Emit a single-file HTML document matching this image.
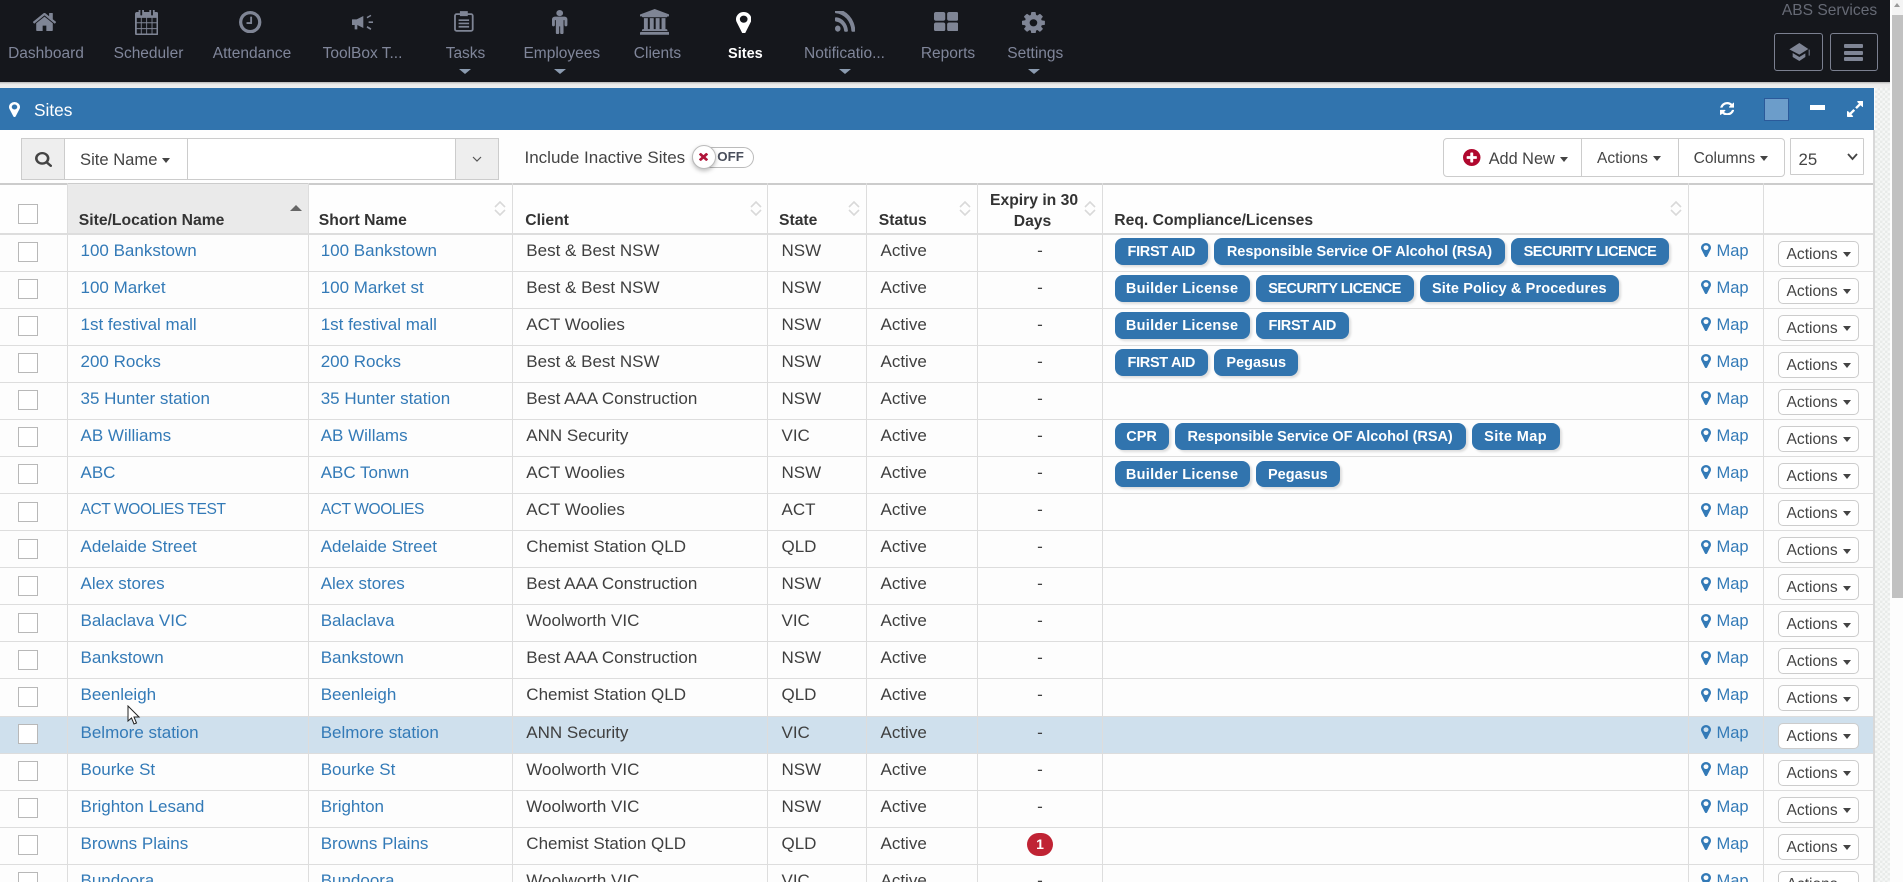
<!DOCTYPE html>
<html lang="en"><head><meta charset="utf-8"><title>Sites</title>
<style>
*{box-sizing:border-box}
html,body{margin:0;padding:0;width:1903px;height:882px;overflow:hidden;background:#fdfdfd;font-family:"Liberation Sans",sans-serif;color:#444}
body{position:relative}
.abs,.n,.ic{position:absolute}
#top{position:absolute;left:0;top:0;width:1890px;height:82px;background:#15171c}
.n{top:44px;line-height:20px;font-size:15.5px;color:#80869a;transform:translateX(-50%);white-space:nowrap}
.ic{fill:#7f8595;display:block}
.tri{position:absolute;width:0;height:0;border-left:6px solid transparent;border-right:6px solid transparent;border-top:5px solid #8b9bb0;top:69px}
.car{display:inline-block;width:0;height:0;border-left:4.5px solid transparent;border-right:4.5px solid transparent;border-top:5px solid #444;vertical-align:middle;margin-left:5px}
#strip{position:absolute;left:0;top:82px;width:1890px;height:6px;background:linear-gradient(#b5b5b5,#e9e9e9 35%,#f0f0f0)}
#noise{position:absolute;left:1875px;top:88px;width:15px;height:794px;background:repeating-conic-gradient(#e8ebe9 0 25%,#f6f7f6 0 50%) 0 0/5px 5px}
#sb{position:absolute;left:1890px;top:0;width:13px;height:882px;background:#fdfdfd}
#bar{position:absolute;left:0;top:88px;width:1874px;height:42px;background:#3174ae}
#panel{position:absolute;left:0;top:130px;width:1875px;height:752px;background:#fefefe;border-right:2px solid #d8d8d8;overflow:hidden}
.bx{position:absolute;border:1px solid #ccc;background:#fff}
.t{position:absolute;white-space:nowrap}
.th{position:absolute;font-weight:bold;font-size:15.7px;color:#333;line-height:20px;white-space:nowrap}
.vl{position:absolute;top:183px;height:52px;width:1px;background:#ddd}
#rows{position:absolute;left:0;top:234.5px;width:1873px;height:647.5px;overflow:hidden}
.r{display:grid;grid-template-columns:66.5px 241px 204.5px 255px 99px 111px 125px 586px 74.5px 110.5px;height:37.08px;border-bottom:1px solid #ddd;font-size:17px;line-height:32.2px;background:#fdfdfd}
.r>div{border-left:1px solid #ddd;white-space:nowrap;overflow:hidden;position:relative;color:#3f3f3f}
.r>div:first-child{border-left:0}
.r>div:nth-child(2),.r>div:nth-child(3){padding-left:13px;color:#337ab7}
.r>div:nth-child(3){padding-left:12.2px}
.r>div:nth-child(4){padding-left:13.3px}
.r>div:nth-child(5){padding-left:13.5px}
.r>div:nth-child(6){padding-left:13.5px}
.r>div:nth-child(7){text-align:center}
.r>div:nth-child(8){display:flex;gap:6px;padding:3.6px 0 0 11.6px}
.r>div:nth-child(9){padding-left:27.5px;color:#337ab7;font-size:16.5px;line-height:32.8px}
.hl{background:#cfe0ed}
.k{position:absolute;left:18px;top:7.5px;width:20px;height:20px;border:1px solid #b8b8b8;background:#fff}
.pin{position:absolute;left:12px;top:8.5px;width:10px;height:14px;fill:#337ab7}
.a{position:absolute;left:14.5px;top:6px;width:80.5px;height:26px;border:1px solid #ccc;border-radius:5px;background:#fff;font-size:15.6px;line-height:25px;padding-left:7.5px;color:#444}
.a .car{margin-left:5px}
.g{display:block;height:26.7px;line-height:28px;border-radius:8px;background:#3174ae;color:#fff;font-weight:bold;font-size:14.5px;text-align:center;box-shadow:2px 2px 2px rgba(0,0,0,.13);white-space:nowrap;flex:none}
.fa{width:93.4px;letter-spacing:-.32px}
.rs{width:291px;letter-spacing:-.05px}
.se{width:158px;letter-spacing:-.5px}
.bl{width:135px;letter-spacing:.3px}
.sp{width:199.5px;letter-spacing:.13px}
.pe{width:84.5px}
.cp{width:54px}
.sm{width:88px;letter-spacing:.4px}
.one{display:inline-block;width:26px;height:23px;line-height:23px;margin-top:5px;border-radius:12px;background:#c02334;color:#fff;font-weight:bold;font-size:14px}
.cc{font-size:15.6px;letter-spacing:-.43px}
</style></head><body>
<svg width="0" height="0" style="position:absolute"><defs>
<symbol id="pin" viewBox="384 128 1024 1536" preserveAspectRatio="none"><path d="M1152 640q0-106-75-181t-181-75-181 75-75 181 75 181 181 75 181-75 75-181zm256 0q0 109-33 179l-364 774q-16 33-47.500 52t-67.500 19-67.500-19-46.500-52l-365-774q-33-70-33-179 0-212 150-362t362-150 362 150 150 362z"/></symbol>
<symbol id="chev" viewBox="0 0 12 17"><path d="M1 8 6 3l5 5M1 11l5 5 5-5" fill="none" stroke="#d9d9d9" stroke-width="1.6"/></symbol>
</defs></svg>

<div id="top">
<svg class="ic" style="left:33px;top:13px;width:23px;height:18px" viewBox="97 256 1598 1280" preserveAspectRatio="none"><path d="M1472 992v480q0 26-19 45t-45 19h-384v-384h-256v384h-384q-26 0-45-19t-19-45v-480q0-1 .5-3t.5-3l575-474 575 474q1 2 1 6zm223-69l-62 74q-8 9-21 11h-3q-13 0-21-7l-692-577-692 577q-12 8-24 7-13-2-21-11l-62-74q-8-10-7-23.500t11-21.500l719-599q32-26 76-26t76 26l244 204v-195q0-14 9-23t23-9h192q14 0 23 9t9 23v408l219 182q10 8 11 21.500t-7 23.500z"/></svg>
<svg class="ic" style="left:135px;top:9.500px;width:23.300px;height:25.500px" viewBox="64 128 1664 1664" preserveAspectRatio="none"><path d="M192 1664h288v-288h-288v288zm352 0h320v-288h-320v288zm-352-352h288v-320h-288v320zm352 0h320v-320h-320v320zm-352-384h288v-288h-288v288zm736 736h320v-288h-320v288zm-384-736h320v-288h-320v288zm768 736h288v-288h-288v288zm-384-352h320v-320h-320v320zm-352-864v-288q0-13-9.500-22.500t-22.500-9.500h-64q-13 0-22.500 9.500t-9.500 22.500v288q0 13 9.500 22.500t22.500 9.500h64q13 0 22.500-9.500t9.500-22.500zm736 864h288v-320h-288v320zm-384-384h320v-288h-320v288zm384 0h288v-288h-288v288zm32-480v-288q0-13-9.500-22.500t-22.500-9.500h-64q-13 0-22.500 9.500t-9.500 22.500v288q0 13 9.500 22.500t22.500 9.500h64q13 0 22.500-9.500t9.500-22.500zm384-64v1280q0 52-38 90t-90 38h-1408q-52 0-90-38t-38-90v-1280q0-52 38-90t90-38h128v-96q0-66 47-113t113-47h64q66 0 113 47t47 113v96h384v-96q0-66 47-113t113-47h64q66 0 113 47t47 113v96h128q52 0 90 38t38 90z"/></svg>
<svg class="ic" style="left:239.300px;top:11px;width:22.400px;height:22.300px" viewBox="128 128 1536 1536" preserveAspectRatio="none"><path d="M1024 544v448q0 14-9 23t-23 9h-320q-14 0-23-9t-9-23v-64q0-14 9-23t23-9h224v-352q0-14 9-23t23-9h64q14 0 23 9t9 23zm416 352q0-148-73-273t-198-198-273-73-273 73-198 198-73 273 73 273 198 198 273 73 273-73 198-198 73-273zm224 0q0 209-103 385.500t-279.500 279.500-385.500 103-385.500-103-279.500-279.500-103-385.500 103-385.500 279.500-279.500 385.500-103 385.500 103 279.500 279.500 103 385.500z"/></svg>
<svg class="ic" style="left:352px;top:14px;width:21.300px;height:16.700px" viewBox="0 0 64 50"><path d="M0 16h14L34 6v36L16 33v13h-8V33H0z"/><path d="M44 9l12-7 2 4-12 7zM50 22h14v5H50zM46 36l12 7-2 5-12-7z"/></svg>
<svg class="ic" style="left:454.300px;top:11px;width:19.700px;height:21px" viewBox="0 0 60 63"><rect x="3" y="9" width="54" height="51" rx="5" fill="none" stroke="#7f8595" stroke-width="5.500"/><path d="M18 0h24v15H18zM14 25h32v5H14zM14 35h32v5H14zM14 45h32v5H14z"/></svg>
<svg class="ic" style="left:552.300px;top:10px;width:15.400px;height:24.300px" viewBox="0 160 1024 1760" preserveAspectRatio="none"><path d="M1024 832v416q0 40-28 68t-68 28-68-28-28-68v-352h-64v912q0 46-33 79t-79 33-79-33-33-79v-464h-64v464q0 46-33 79t-79 33-79-33-33-79v-912h-64v352q0 40-28 68t-68 28-68-28-28-68v-416q0-80 56-136t136-56h640q80 0 136 56t56 136zm-288-448q0 93-65.500 158.500t-158.500 65.500-158.500-65.500-65.500-158.500 65.500-158.500 158.500-65.500 158.500 65.500 65.500 158.500z"/></svg>
<svg class="ic" style="left:640px;top:9.300px;width:29.400px;height:25.700px" viewBox="0 0 1920 1792" preserveAspectRatio="none"><path d="M960 0l960 384v128h-128q0 26-20.500 45t-48.500 19h-1526q-28 0-48.500-19t-20.500-45h-128v-128zm-704 640h256v768h128v-768h256v768h128v-768h256v768h128v-768h256v768h59q28 0 48.500 19t20.500 45v64h-1664v-64q0-26 20.500-45t48.500-19h59v-768zm1595 960q28 0 48.500 19t20.500 45v128h-1920v-128q0-26 20.500-45t48.500-19h1782z"/></svg>
<svg class="ic" style="left:736px;top:11.700px;width:15.400px;height:21.600px;fill:#fff"><use href="#pin" width="15.400" height="21.600"/></svg>
<svg class="ic" style="left:834.700px;top:11px;width:20.300px;height:20.700px" viewBox="192 256 1408 1280" preserveAspectRatio="none"><path d="M576 1344q0 80-56 136t-136 56-136-56-56-136 56-136 136-56 136 56 56 136zm512 123q2 28-17 48-18 21-47 21h-135q-25 0-43-16.500t-20-41.500q-22-229-184.500-391.500t-391.500-184.500q-25-2-41.500-20t-16.500-43v-135q0-29 21-47 17-17 43-17h5q160 13 306 80.500t259 181.500q114 113 181.500 259t80.500 306zm512 2q2 27-18 47-18 20-46 20h-143q-26 0-44.500-17.500t-19.500-42.500q-12-215-101-408.500t-231.500-336-336-231.500-408.500-102q-25-1-42.500-19.500t-17.500-43.500v-143q0-28 20-46 18-18 44-18h3q262 13 501.500 120t425.500 294q187 186 294 425.500t120 501.500z"/></svg>
<svg class="ic" style="left:934px;top:11.700px;width:24.400px;height:19.300px" viewBox="64 128 1664 1408" preserveAspectRatio="none"><path d="M832 1024v384q0 52-38 90t-90 38h-512q-52 0-90-38t-38-90v-384q0-52 38-90t90-38h512q52 0 90 38t38 90zm0-768v384q0 52-38 90t-90 38h-512q-52 0-90-38t-38-90v-384q0-52 38-90t90-38h512q52 0 90 38t38 90zm896 768v384q0 52-38 90t-90 38h-512q-52 0-90-38t-38-90v-384q0-52 38-90t90-38h512q52 0 90 38t38 90zm0-768v384q0 52-38 90t-90 38h-512q-52 0-90-38t-38-90v-384q0-52 38-90t90-38h512q52 0 90 38t38 90z"/></svg>
<svg class="ic" style="left:1022.400px;top:11.700px;width:22.900px;height:21.600px" viewBox="128 128 1536 1536" preserveAspectRatio="none"><path d="M1152 896q0-106-75-181t-181-75-181 75-75 181 75 181 181 75 181-75 75-181zm512-109v222q0 12-8 23t-20 13l-185 28q-19 54-39 91 35 50 107 138 10 12 10 25t-9 23q-27 37-99 108t-94 71q-12 0-26-9l-138-108q-44 23-91 38-16 136-29 186-7 28-36 28h-222q-14 0-24.500-8.500t-11.500-21.500l-28-184q-49-16-90-37l-141 107q-10 9-25 9-14 0-25-11-126-114-165-168-7-10-7-23 0-12 8-23 15-21 51-66.500t54-70.500q-27-50-41-99l-183-27q-13-2-21-12.500t-8-23.500v-222q0-12 8-23t19-13l186-28q14-46 39-92-40-57-107-138-10-12-10-24 0-10 9-23 26-36 98.500-107.500t94.500-71.500q13 0 26 10l138 107q44-23 91-38 16-136 29-186 7-28 36-28h222q14 0 24.500 8.500t11.500 21.500l28 184q49 16 90 37l142-107q9-9 24-9 13 0 25 10 129 119 165 170 7 8 7 22 0 12-8 23-15 21-51 66.500t-54 70.500q26 50 41 98l183 28q13 2 21 12.500t8 23.500z"/></svg>

<div class="n" style="left:46px">Dashboard</div>
<div class="n" style="left:148.500px">Scheduler</div>
<div class="n" style="left:252px">Attendance</div>
<div class="n" style="left:362.500px">ToolBox T...</div>
<div class="n" style="left:465.500px">Tasks</div>
<div class="n" style="left:561.800px">Employees</div>
<div class="n" style="left:657.500px">Clients</div>
<div class="n" style="left:745.400px;color:#fff;font-weight:bold;font-size:14.500px">Sites</div>
<div class="n" style="left:844.500px">Notificatio...</div>
<div class="n" style="left:948px">Reports</div>
<div class="n" style="left:1035.300px">Settings</div>
<div class="tri" style="left:458.500px"></div><div class="tri" style="left:554px"></div><div class="tri" style="left:839px"></div><div class="tri" style="left:1028px"></div>

<div class="n" style="left:1829.500px;top:1px;color:#666a75;font-size:15.600px">ABS Services</div>
<div class="abs" style="left:1774.300px;top:33.300px;width:48.400px;height:37.400px;border:1px solid #7b8090;border-radius:3px"></div>
<div class="abs" style="left:1830px;top:33.300px;width:47.700px;height:37.400px;border:1px solid #7b8090;border-radius:3px"></div>
<svg class="ic" style="left:1789.300px;top:42.700px;width:20.700px;height:18px" viewBox="0 0 62 54"><path d="M1 19 31 0l27 18-27 17zM59 20h3v18h-3zM11 30l20 12 18-11v11L31 54 11 42z"/></svg>
<div class="abs" style="left:1844px;top:44px;width:19.300px;height:4px;background:#7f8595;border-radius:1px"></div>
<div class="abs" style="left:1844px;top:50.500px;width:19.300px;height:4px;background:#7f8595;border-radius:1px"></div>
<div class="abs" style="left:1844px;top:56.500px;width:19.300px;height:4px;background:#7f8595;border-radius:1px"></div>
</div>
<div id="strip"></div>
<div id="noise"></div>
<div id="sb">
<div class="abs" style="left:2px;top:0;width:11px;height:15px;background:#f4f4f4"></div>
<div class="abs" style="left:4px;top:3px;width:0;height:0;border-left:3.500px solid transparent;border-right:3.500px solid transparent;border-bottom:4px solid #9a9a9a"></div>
<div class="abs" style="left:2px;top:15px;width:11px;height:582.700px;background:#c1c1c1"></div>
</div>

<div id="bar">
<svg class="abs" style="left:9px;top:14px;width:11px;height:15px;fill:#fff"><use href="#pin" width="11" height="15"/></svg>
<div class="t" style="left:34px;top:1px;line-height:42px;color:#fff;font-size:17.300px">Sites</div>
<svg class="abs" style="left:1720px;top:13.700px;width:14.400px;height:13.500px;fill:#fff" viewBox="128 128 1536 1536" preserveAspectRatio="none"><path d="M1639 1056q0 5-1 7-64 268-268 434.500t-478 166.500q-146 0-282.500-55t-243.500-157l-129 129q-19 19-45 19t-45-19-19-45v-448q0-26 19-45t45-19h448q26 0 45 19t19 45-19 45l-137 137q71 66 161 102t187 36q134 0 250-65t186-179q11-17 53-117 8-23 30-23h192q13 0 22.500 9.500t9.500 22.500zm25-800v448q0 26-19 45t-45 19h-448q-26 0-45-19t-19-45 19-45l138-138q-148-137-349-137-134 0-250 65t-186 179q-11 17-53 117-8 23-30 23h-199q-13 0-22.500-9.500t-9.500-22.500v-7q65-268 270-434.500t480-166.500q146 0 284 55.500t245 156.500l130-129q19-19 45-19t45 19 19 45z"/></svg>
<div class="abs" style="left:1764px;top:9.700px;width:24.700px;height:23px;background:#6c9dca;border:1px solid #2b5a9a"></div>
<div class="abs" style="left:1810px;top:17px;width:14.600px;height:5px;background:#fff"></div>
<svg class="abs" style="left:1846.700px;top:12.700px;width:16.300px;height:16px;fill:#fff" viewBox="128 128 1536 1536" preserveAspectRatio="none"><path d="M883 1056q0 13-10 23l-332 332 144 144q19 19 19 45t-19 45-45 19h-448q-26 0-45-19t-19-45v-448q0-26 19-45t45-19 45 19l144 144 332-332q10-10 23-10t23 10l114 114q10 10 10 23zm781-864v448q0 26-19 45t-45 19-45-19l-144-144-332 332q-10 10-23 10t-23-10l-114-114q-10-10-10-23t10-23l332-332-144-144q-19-19-19-45t19-45 45-19h448q26 0 45 19t19 45z"/></svg>
</div>

<div id="panel"></div>

<!-- toolbar -->
<div class="bx" style="left:21px;top:138px;width:478px;height:41.500px;border-color:#ccc"></div>
<div class="abs" style="left:22px;top:139px;width:43px;height:39.500px;background:#eee;border-right:1px solid #ccc"></div>
<div class="abs" style="left:187px;top:139px;width:1px;height:39.500px;background:#ccc"></div>
<div class="abs" style="left:455px;top:139px;width:43px;height:39.500px;background:#eee;border-left:1px solid #ccc"></div>
<svg class="abs" style="left:34.700px;top:151.700px;width:17.100px;height:15px;fill:#444" viewBox="64 128 1664 1664" preserveAspectRatio="none"><path d="M1216 832q0-185-131.500-316.500t-316.500-131.500-316.500 131.500-131.500 316.500 131.500 316.500 316.500 131.500 316.500-131.500 131.500-316.500zm512 832q0 52-38 90t-90 38q-54 0-90-38l-343-342q-179 124-399 124-143 0-273.500-55.500t-225-150-150-225-55.500-273.500 55.500-273.500 150-225 225-150 273.500-55.500 273.500 55.500 225 150 150 225 55.500 273.500q0 220-124 399l343 343q37 37 37 90z"/></svg>
<div class="t" style="left:80px;top:148.500px;font-size:16.600px;line-height:22px;color:#444">Site Name<span class="car" style="margin-left:5px"></span></div>
<svg class="abs" style="left:472px;top:156px;width:10px;height:7px"><path d="M1 1l4 4 4-4" fill="none" stroke="#555" stroke-width="1.200"/></svg>

<div class="t" style="left:524.500px;top:147px;font-size:17px;line-height:22px;color:#444">Include Inactive Sites</div>
<div class="abs" style="left:692px;top:147.300px;width:61.500px;height:20.500px;border:1px solid #bbb;border-radius:11px;background:#fff"></div>
<div class="abs" style="left:692px;top:144.500px;width:24px;height:24px;border-radius:50%;border:1px solid #bbb;background:#fff;box-shadow:0 2px 4px rgba(0,0,0,.25)"></div>
<svg class="abs" style="left:699px;top:152.300px;width:9px;height:9px;fill:#b0153a" viewBox="302 238 1188 1316" preserveAspectRatio="none"><path d="M1490 1322q0 40-28 68l-136 136q-28 28-68 28t-68-28l-294-294-294 294q-28 28-68 28t-68-28l-136-136q-28-28-28-68t28-68l294-294-294-294q-28-28-28-68t28-68l136-136q28-28 68-28t68 28l294 294 294-294q28-28 68-28t68 28l136 136q28 28 28 68t-28 68l-294 294 294 294q28 28 28 68z"/></svg>
<div class="t" style="left:717.300px;top:147px;font-size:13.300px;line-height:20px;font-weight:bold;color:#4a4f5c">OFF</div>

<div class="abs" style="left:1443.400px;top:138px;width:341.200px;height:38.700px;border:1px solid #ccc;border-radius:4px;background:#fff"></div>
<div class="abs" style="left:1581px;top:138px;width:1px;height:38.700px;background:#ccc"></div>
<div class="abs" style="left:1677.500px;top:138px;width:1px;height:38.700px;background:#ccc"></div>
<svg class="abs" style="left:1463px;top:149px;width:17.500px;height:17px;fill:#b0082e" viewBox="128 128 1536 1536" preserveAspectRatio="none"><circle cx="896" cy="896" r="560" fill="#fff"/><path d="M1344 960v-128q0-26-19-45t-45-19h-256v-256q0-26-19-45t-45-19h-128q-26 0-45 19t-19 45v256h-256q-26 0-45 19t-19 45v128q0 26 19 45t45 19h256v256q0 26 19 45t45 19h128q26 0 45-19t19-45v-256h256q26 0 45-19t19-45zm320-64q0 209-103 385.500t-279.500 279.500-385.500 103-385.500-103-279.500-279.500-103-385.500 103-385.500 279.500-279.500 385.500-103 385.500 103 279.500 279.500 103 385.500z"/></svg>
<div class="t" style="left:1488.700px;top:147.500px;font-size:16.300px;line-height:22px;color:#444">Add New<span class="car"></span></div>
<div class="t" style="left:1597px;top:147.500px;font-size:15.500px;line-height:22px;color:#444">Actions<span class="car"></span></div>
<div class="t" style="left:1693.600px;top:147.500px;font-size:15.600px;line-height:22px;color:#444">Columns<span class="car"></span></div>
<div class="bx" style="left:1789.500px;top:138px;width:74px;height:36.700px;border-radius:1px"></div>
<div class="t" style="left:1798.500px;top:149px;font-size:16.800px;line-height:22px;color:#444">25</div>
<svg class="abs" style="left:1846.500px;top:153px;width:11px;height:8px"><path d="M1 1l4.500 5L10 1" fill="none" stroke="#444" stroke-width="1.800"/></svg>

<!-- table head -->
<div class="abs" style="left:0;top:183px;width:1873px;height:1.500px;background:#ccc"></div>
<div class="abs" style="left:66.500px;top:184px;width:241px;height:49px;background:#eaeaea"></div>
<div class="abs" style="left:0;top:233px;width:1873px;height:2px;background:#ddd"></div>
<div class="vl" style="left:66.500px"></div><div class="vl" style="left:307.500px"></div><div class="vl" style="left:512px"></div><div class="vl" style="left:767px"></div><div class="vl" style="left:866px"></div><div class="vl" style="left:977px"></div><div class="vl" style="left:1102px"></div><div class="vl" style="left:1688px"></div><div class="vl" style="left:1762.500px"></div>
<div class="k" style="top:204px"></div>
<div class="th" style="left:78.800px;top:210.500px">Site/Location Name</div>
<div class="abs" style="left:290px;top:205px;width:0;height:0;border-left:6px solid transparent;border-right:6px solid transparent;border-bottom:6px solid #666"></div>
<div class="th" style="left:318.800px;top:210.500px">Short Name</div>
<div class="th" style="left:525.300px;top:210.500px">Client</div>
<div class="th" style="left:779px;top:210.500px">State</div>
<div class="th" style="left:878.800px;top:210.500px">Status</div>
<div class="th" style="left:990px;top:189.500px;width:85px;text-align:center;line-height:21px">Expiry in 30<br>Days</div>
<div class="th" style="left:1114.300px;top:210.500px">Req. Compliance/Licenses</div>
<svg class="abs" style="left:494px;top:198px;width:12px;height:19px"><use href="#chev" width="12" height="19"/></svg>
<svg class="abs" style="left:750px;top:198px;width:12px;height:19px"><use href="#chev" width="12" height="19"/></svg>
<svg class="abs" style="left:848px;top:198px;width:12px;height:19px"><use href="#chev" width="12" height="19"/></svg>
<svg class="abs" style="left:959px;top:198px;width:12px;height:19px"><use href="#chev" width="12" height="19"/></svg>
<svg class="abs" style="left:1084px;top:198px;width:12px;height:19px"><use href="#chev" width="12" height="19"/></svg>
<svg class="abs" style="left:1670px;top:198px;width:12px;height:19px"><use href="#chev" width="12" height="19"/></svg>

<div id="rows">
<div class="r"><div><span class="k"></span></div><div>100 Bankstown</div><div>100 Bankstown</div><div>Best &amp; Best NSW</div><div>NSW</div><div>Active</div><div>-</div><div><span class="g fa">FIRST AID</span><span class="g rs">Responsible Service OF Alcohol (RSA)</span><span class="g se">SECURITY LICENCE</span></div><div><svg class="pin"><use href="#pin" width="10" height="14"/></svg>Map</div><div><span class="a">Actions<span class="car"></span></span></div></div>
<div class="r"><div><span class="k"></span></div><div>100 Market</div><div>100 Market st</div><div>Best &amp; Best NSW</div><div>NSW</div><div>Active</div><div>-</div><div><span class="g bl">Builder License</span><span class="g se">SECURITY LICENCE</span><span class="g sp">Site Policy &amp; Procedures</span></div><div><svg class="pin"><use href="#pin" width="10" height="14"/></svg>Map</div><div><span class="a">Actions<span class="car"></span></span></div></div>
<div class="r"><div><span class="k"></span></div><div>1st festival mall</div><div>1st festival mall</div><div>ACT Woolies</div><div>NSW</div><div>Active</div><div>-</div><div><span class="g bl">Builder License</span><span class="g fa">FIRST AID</span></div><div><svg class="pin"><use href="#pin" width="10" height="14"/></svg>Map</div><div><span class="a">Actions<span class="car"></span></span></div></div>
<div class="r"><div><span class="k"></span></div><div>200 Rocks</div><div>200 Rocks</div><div>Best &amp; Best NSW</div><div>NSW</div><div>Active</div><div>-</div><div><span class="g fa">FIRST AID</span><span class="g pe">Pegasus</span></div><div><svg class="pin"><use href="#pin" width="10" height="14"/></svg>Map</div><div><span class="a">Actions<span class="car"></span></span></div></div>
<div class="r"><div><span class="k"></span></div><div>35 Hunter station</div><div>35 Hunter station</div><div>Best AAA Construction</div><div>NSW</div><div>Active</div><div>-</div><div></div><div><svg class="pin"><use href="#pin" width="10" height="14"/></svg>Map</div><div><span class="a">Actions<span class="car"></span></span></div></div>
<div class="r"><div><span class="k"></span></div><div>AB Williams</div><div>AB Willams</div><div>ANN Security</div><div>VIC</div><div>Active</div><div>-</div><div><span class="g cp">CPR</span><span class="g rs">Responsible Service OF Alcohol (RSA)</span><span class="g sm">Site Map</span></div><div><svg class="pin"><use href="#pin" width="10" height="14"/></svg>Map</div><div><span class="a">Actions<span class="car"></span></span></div></div>
<div class="r"><div><span class="k"></span></div><div>ABC</div><div>ABC Tonwn</div><div>ACT Woolies</div><div>NSW</div><div>Active</div><div>-</div><div><span class="g bl">Builder License</span><span class="g pe">Pegasus</span></div><div><svg class="pin"><use href="#pin" width="10" height="14"/></svg>Map</div><div><span class="a">Actions<span class="car"></span></span></div></div>
<div class="r"><div><span class="k"></span></div><div class="cc">ACT WOOLIES TEST</div><div class="cc">ACT WOOLIES</div><div>ACT Woolies</div><div>ACT</div><div>Active</div><div>-</div><div></div><div><svg class="pin"><use href="#pin" width="10" height="14"/></svg>Map</div><div><span class="a">Actions<span class="car"></span></span></div></div>
<div class="r"><div><span class="k"></span></div><div>Adelaide Street</div><div>Adelaide Street</div><div>Chemist Station QLD</div><div>QLD</div><div>Active</div><div>-</div><div></div><div><svg class="pin"><use href="#pin" width="10" height="14"/></svg>Map</div><div><span class="a">Actions<span class="car"></span></span></div></div>
<div class="r"><div><span class="k"></span></div><div>Alex stores</div><div>Alex stores</div><div>Best AAA Construction</div><div>NSW</div><div>Active</div><div>-</div><div></div><div><svg class="pin"><use href="#pin" width="10" height="14"/></svg>Map</div><div><span class="a">Actions<span class="car"></span></span></div></div>
<div class="r"><div><span class="k"></span></div><div>Balaclava VIC</div><div>Balaclava</div><div>Woolworth VIC</div><div>VIC</div><div>Active</div><div>-</div><div></div><div><svg class="pin"><use href="#pin" width="10" height="14"/></svg>Map</div><div><span class="a">Actions<span class="car"></span></span></div></div>
<div class="r"><div><span class="k"></span></div><div>Bankstown</div><div>Bankstown</div><div>Best AAA Construction</div><div>NSW</div><div>Active</div><div>-</div><div></div><div><svg class="pin"><use href="#pin" width="10" height="14"/></svg>Map</div><div><span class="a">Actions<span class="car"></span></span></div></div>
<div class="r"><div><span class="k"></span></div><div>Beenleigh</div><div>Beenleigh</div><div>Chemist Station QLD</div><div>QLD</div><div>Active</div><div>-</div><div></div><div><svg class="pin"><use href="#pin" width="10" height="14"/></svg>Map</div><div><span class="a">Actions<span class="car"></span></span></div></div>
<div class="r hl"><div><span class="k"></span></div><div>Belmore station</div><div>Belmore station</div><div>ANN Security</div><div>VIC</div><div>Active</div><div>-</div><div></div><div><svg class="pin"><use href="#pin" width="10" height="14"/></svg>Map</div><div><span class="a">Actions<span class="car"></span></span></div></div>
<div class="r"><div><span class="k"></span></div><div>Bourke St</div><div>Bourke St</div><div>Woolworth VIC</div><div>NSW</div><div>Active</div><div>-</div><div></div><div><svg class="pin"><use href="#pin" width="10" height="14"/></svg>Map</div><div><span class="a">Actions<span class="car"></span></span></div></div>
<div class="r"><div><span class="k"></span></div><div>Brighton Lesand</div><div>Brighton</div><div>Woolworth VIC</div><div>NSW</div><div>Active</div><div>-</div><div></div><div><svg class="pin"><use href="#pin" width="10" height="14"/></svg>Map</div><div><span class="a">Actions<span class="car"></span></span></div></div>
<div class="r"><div><span class="k"></span></div><div>Browns Plains</div><div>Browns Plains</div><div>Chemist Station QLD</div><div>QLD</div><div>Active</div><div><span class="one">1</span></div><div></div><div><svg class="pin"><use href="#pin" width="10" height="14"/></svg>Map</div><div><span class="a">Actions<span class="car"></span></span></div></div>
<div class="r"><div><span class="k"></span></div><div>Bundoora</div><div>Bundoora</div><div>Woolworth VIC</div><div>VIC</div><div>Active</div><div>-</div><div></div><div><svg class="pin"><use href="#pin" width="10" height="14"/></svg>Map</div><div><span class="a">Actions<span class="car"></span></span></div></div>
</div>

<svg class="abs" style="left:127px;top:705px;width:14px;height:20px"><path d="M1 1v15l3.500-3 2.500 6 2.500-1-2.500-6H12z" fill="#fff" stroke="#222" stroke-width="1"/></svg>
</body></html>
